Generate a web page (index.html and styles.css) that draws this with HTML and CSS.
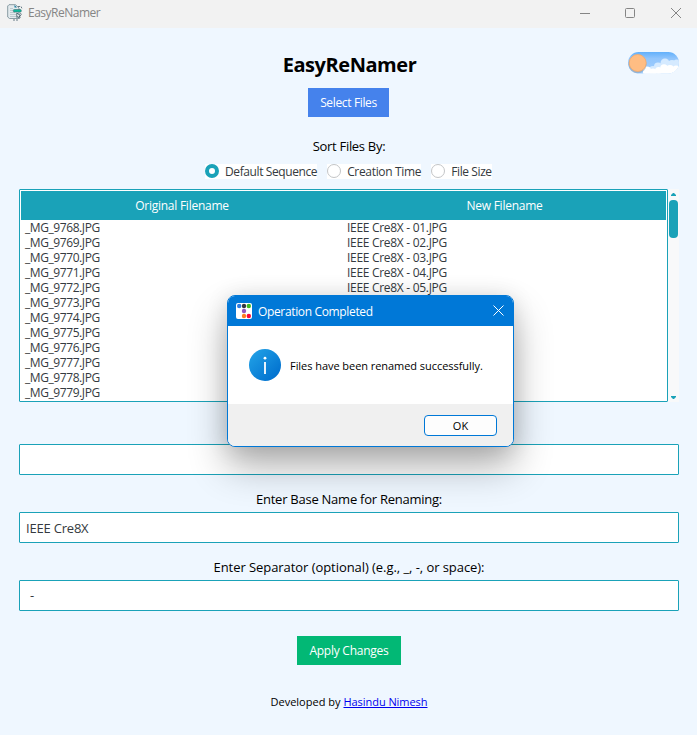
FILE: index.html
```html
<!DOCTYPE html>
<html lang="en">
<head>
<meta charset="utf-8">
<title>EasyReNamer</title>
<link rel="stylesheet" href="styles.css">
</head>
<body>
<header class="titlebar">
  <svg class="app-icon" width="17" height="17" viewBox="0 0 17 17">
    <path d="M2 .7h6.5L12 4v10.5H2.5L.7 13V2z" fill="#e3eaed" stroke="#7d929b" stroke-width=".9"/>
    <path d="M3 4.5h3M3 6.5h3M3 8.5h5M3 10.5h6M3 12.5h6" stroke="#b3c1c8" stroke-width=".8"/>
    <path d="M7.5 1l2.5 2.5H7.5z" fill="#12769a"/>
    <path d="M11 2.5h3l1 2M13 9.5l2 1M6 16h6" fill="none" stroke="#667b85" stroke-dasharray="2 1"/>
    <rect x="6.3" y="5.5" width="8" height="2.6" rx="1" fill="#08b99c" stroke="#416a72" stroke-width=".6"/>
    <path d="M9.8 9v4.5l1.3-1 1 1.7 1.1-.6-1-1.6 1.5-.3z" fill="#edf3f6" stroke="#344f5c" stroke-width=".8"/>
  </svg>
  <span class="app-name">EasyReNamer</span>
  <svg class="window-controls" width="102" height="12" viewBox="0 0 102 12">
    <path d="M0 6.5h10" stroke="#858585"/>
    <rect x="45.5" y="1.5" width="9" height="9" rx="1" fill="none" stroke="#858585"/>
    <path d="M91 1l10 10M101 1L91 11" stroke="#858585"/>
  </svg>
</header>
<main class="content">
  <div class="heading">
    <h1>EasyReNamer</h1>
    <svg class="theme-toggle" width="51" height="23" viewBox="0 0 51 23">
      <defs>
        <linearGradient id="sky" x2="0" y2="1"><stop stop-color="#62b0fb"/><stop offset=".3" stop-color="#91c5fc"/><stop offset="1" stop-color="#a4d0ff"/></linearGradient>
        <clipPath id="pill"><rect width="51" height="21.5" rx="10.7"/></clipPath>
      </defs>
      <g clip-path="url(#pill)">
        <rect width="51" height="22" fill="url(#sky)"/>
        <g fill="#d5eaff"><circle cx="25" cy="18" r="4"/><circle cx="30" cy="14.5" r="4"/><circle cx="37" cy="11" r="4.5"/><circle cx="44" cy="12" r="4"/><circle cx="49" cy="12" r="4.5"/><path d="M25 15h26v7H25z"/></g>
        <g fill="#fff"><circle cx="19" cy="18.5" r="4"/><circle cx="25" cy="20" r="3.5"/><circle cx="30.5" cy="18.5" r="3.5"/><circle cx="36" cy="16" r="3.7"/><circle cx="42" cy="17" r="4"/><circle cx="48" cy="17" r="3.5"/><path d="M15 19h36v3H15z"/></g>
      </g>
      <circle cx="9.5" cy="12.3" r="9" fill="#819fba" opacity=".55"/>
      <circle cx="9.7" cy="11" r="8.5" fill="#ffbd83" stroke="#f5a968" stroke-width=".8"/>
    </svg>
  </div>
  <button class="btn select"><span>Select Files</span></button>
  <div class="label sort-label"><span>Sort Files By:</span></div>
  <div class="radios">
    <div class="radio"><i class="dot on"></i><span>Default Sequence</span></div>
    <div class="radio creation"><i class="dot"></i><span>Creation Time</span></div>
    <div class="radio"><i class="dot"></i><span>File Size</span></div>
  </div>
  <section class="list">
    <div class="table">
      <div class="row head"><span>Original Filename</span><span>New Filename</span></div>
      <div class="row"><span>_MG_9768.JPG</span><span class="renamed">IEEE Cre8X - 01.JPG</span></div>
      <div class="row"><span>_MG_9769.JPG</span><span class="renamed">IEEE Cre8X - 02.JPG</span></div>
      <div class="row"><span>_MG_9770.JPG</span><span class="renamed">IEEE Cre8X - 03.JPG</span></div>
      <div class="row"><span>_MG_9771.JPG</span><span class="renamed">IEEE Cre8X - 04.JPG</span></div>
      <div class="row"><span>_MG_9772.JPG</span><span class="renamed">IEEE Cre8X - 05.JPG</span></div>
      <div class="row"><span>_MG_9773.JPG</span></div>
      <div class="row"><span>_MG_9774.JPG</span></div>
      <div class="row"><span>_MG_9775.JPG</span></div>
      <div class="row"><span>_MG_9776.JPG</span></div>
      <div class="row"><span>_MG_9777.JPG</span></div>
      <div class="row"><span>_MG_9778.JPG</span></div>
      <div class="row"><span>_MG_9779.JPG</span></div>
    </div>
    <div class="scrollbar">
      <svg width="5" height="3" viewBox="0 0 5 3"><path d="M0 3V2l2-2h1l2 2v1z" fill="#1aa2b8"/></svg>
      <div class="thumb"></div>
      <svg class="down" width="5" height="3" viewBox="0 0 5 3"><path d="M0 0v1l2 2h1l2-2V0z" fill="#1aa2b8"/></svg>
    </div>
  </section>
  <div class="field first"></div>
  <div class="label base"><span>Enter Base Name for Renaming:</span></div>
  <div class="field"><span>IEEE Cre8X</span></div>
  <div class="label sep"><span>Enter Separator (optional) (e.g., _, -, or space):</span></div>
  <div class="field dash"><span>-</span></div>
  <button class="btn apply"><span>Apply Changes</span></button>
  <footer><span>Developed by</span><a href="#">Hasindu Nimesh</a></footer>
</main>
<div class="dialog" role="dialog">
  <div class="dialog-title">
    <svg width="16" height="16" viewBox="0 0 16 16">
      <rect width="16" height="16" rx="2" fill="#fff"/>
      <circle cx="3.2" cy="3" r="2.2" fill="#2f7de1"/><circle cx="8" cy="3" r="2.2" fill="#333740"/><circle cx="12.8" cy="3" r="2.2" fill="#3dba20"/>
      <circle cx="8" cy="8" r="2.2" fill="#9354bd"/><circle cx="8" cy="13" r="2.2" fill="#ff7b20"/><circle cx="12.8" cy="13" r="2.2" fill="#fb0738"/>
    </svg>
    <span>Operation Completed</span>
    <svg class="close" width="11" height="11" viewBox="0 0 11 11"><path d="M.5 .5l10 10M10.5 .5l-10 10" stroke="#fff"/></svg>
  </div>
  <div class="dialog-body">
    <svg width="32" height="32" viewBox="0 0 32 32">
      <defs><linearGradient id="info" x2="1" y2="1"><stop offset=".1" stop-color="#209fe5"/><stop offset=".9" stop-color="#006fce"/></linearGradient></defs>
      <circle cx="16" cy="16" r="16" fill="url(#info)"/>
      <circle cx="16" cy="9.2" r="1.4" fill="#fff"/><path d="M16 13v12" stroke="#fff" stroke-width="1.8"/>
    </svg>
    <span>Files have been renamed successfully.</span>
  </div>
  <div class="dialog-actions"><button class="ok">OK</button></div>
</div>
</body>
</html>
```
FILE: styles.css
```css
* { box-sizing: border-box; }
body { margin: 0; width: 697px; height: 735px; overflow: hidden; background: #eff7ff; color: #000; font: 12px/15px "Open Sans", "Noto Sans", sans-serif; white-space: nowrap; }
button { font: inherit; padding: 0; border: 0; }
.titlebar { display: flex; align-items: center; height: 28px; padding: 0 15px 3px 7px; background: #f2f2f2; color: #858585; }
.app-icon { margin-top: -1px; }
.app-name { margin-left: 4px; letter-spacing: -.5px; }
.window-controls { margin-left: auto; }
.content { display: flex; flex-direction: column; align-items: center; padding: 0 18px 0 19px; }
.heading { display: grid; grid-template-columns: 1fr auto 1fr; align-items: center; width: 100%; height: 60px; padding-top: 13px; }
h1 { grid-column: 2; margin: 0; font-size: 20px; line-height: 28px; letter-spacing: -.45px; font-weight: 700; position: relative; left: .5px; }
.theme-toggle { justify-self: end; margin-top: -3px; }
.btn { display: flex; align-items: center; justify-content: center; height: 29px; color: #fff; }
.select { width: 81px; margin-right: 1px; background: #4582ec; letter-spacing: -.35px; }
.label { height: 15px; margin-top: 17px; margin-bottom: 5px; font-size: 13px; }
.base { letter-spacing: -.25px; }
.sep { letter-spacing: -.06px; }
.sort-label { margin: 22px 0 10px; letter-spacing: -.3px; }
.radios { display: flex; gap: 10px; height: 15px; width: 288px; color: #343a40; }
.radio { display: flex; height: 15px; background: #fff; letter-spacing: -.4px; }
.creation { letter-spacing: -.33px; }
.dot { width: 14px; height: 14px; margin-right: 6px; border: 1px solid #c3c5c7; border-radius: 50%; background: #fff; }
.dot.on { border: 4px solid #1aa2b8; }
.list { display: flex; width: 100%; height: 213px; margin-top: 10px; }
.table { width: 649px; border: 1px solid #1aa2b8; border-radius: 1px; background: #fff; color: #343a40; padding: 1px; }
.row { display: grid; grid-template-columns: 322px 1fr; height: 15px; padding-left: 4px; letter-spacing: -.42px; }
.renamed { letter-spacing: -.3px; }
.head { height: 29px; padding: 0; align-items: center; text-align: center; color: #fff; background: #1aa2b8; letter-spacing: -.25px; }
.scrollbar { width: 11px; padding: 4px 1px 3px; display: flex; flex-direction: column; align-items: center; background: #f8f9fa; }
.thumb { width: 9px; height: 38px; margin-top: 4px; border-radius: 4px; background: #1aa2b8; }
.down { margin-top: auto; }
.field { width: 100%; height: 31px; padding: 2px 6px 0; display: flex; align-items: center; border: 1px solid #1aa2b8; border-radius: 1px; background: #fff; color: #343a40; font-size: 13px; letter-spacing: -.2px; }
.first { margin-top: 42px; }
.dash { padding: 0 0 0 10px; }
.apply { width: 104px; margin-top: 25px; background: #02b875; letter-spacing: -.25px; }
footer { display: flex; gap: 3px; margin-top: 29px; font-size: 11px; }
footer a { color: #00e; letter-spacing: -.05px; }
.dialog { position: absolute; left: 227px; top: 295px; width: 287px; height: 152px; border: 1px solid #0078d7; border-radius: 8px; overflow: hidden; background: #fff; box-shadow: 0 20px 38px rgba(0,0,0,.3), 0 2px 22px rgba(0,0,0,.12); }
.dialog-title { display: flex; align-items: center; height: 30px; padding: 0 9px 0 8px; background: #0078d7; color: #fff; }
.dialog-title span { margin-left: 6px; letter-spacing: -.35px; }
.close { margin: -2px 0 0 auto; }
.dialog-body { display: flex; align-items: center; height: 78px; padding-left: 21px; font-size: 11px; letter-spacing: -.05px; }
.dialog-body span { margin-left: 9px; }
.dialog-actions { display: flex; height: 42px; padding: 11px 16px 0 0; justify-content: flex-end; background: #f0f0f0; }
.ok { width: 73px; height: 21px; border: 1px solid #0078d7; border-radius: 4px; background: #fdfdfd; font-size: 11px; }
```
